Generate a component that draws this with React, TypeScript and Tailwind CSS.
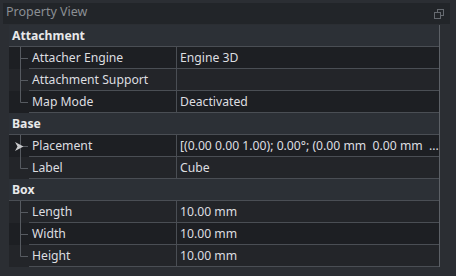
import React from "react";

type Prop = { name: string; value: string; expandable?: boolean };
type Group = { title: string; items: Prop[] };

const groups: Group[] = [
  {
    title: "Attachment",
    items: [
      { name: "Attacher Engine", value: "Engine 3D" },
      { name: "Attachment Support", value: "" },
      { name: "Map Mode", value: "Deactivated" },
    ],
  },
  {
    title: "Base",
    items: [
      {
        name: "Placement",
        value: "[(0.00 0.00 1.00); 0.00°; (0.00 mm  0.00 mm  ...",
        expandable: true,
      },
      { name: "Label", value: "Cube" },
    ],
  },
  {
    title: "Box",
    items: [
      { name: "Length", value: "10.00 mm" },
      { name: "Width", value: "10.00 mm" },
      { name: "Height", value: "10.00 mm" },
    ],
  },
];

const TreeBranch: React.FC<{ last: boolean; expandable?: boolean }> = ({ last, expandable }) => (
  <svg width="20" height="22" viewBox="0 0 20 22" className="shrink-0">
    <line x1="11.5" y1="0" x2="11.5" y2={last ? 11.5 : 22} stroke="#565a60" strokeWidth="1" />
    <line x1="11.5" y1="11.5" x2="19" y2="11.5" stroke="#565a60" strokeWidth="1" />
    {expandable && <polygon points="6,7 14.5,11.5 6,16 8.5,11.5" fill="#c9cacc" />}
  </svg>
);

export default function App() {
  let rowIndex = 0;
  return (
    <div
      className="w-[456px] h-[276px] bg-[#2b2e33] pt-[3px] px-[3px] overflow-hidden"
      style={{ fontFamily: '"Noto Sans", "Open Sans", sans-serif' }}
    >
      {/* Titelleiste */}
      <div className="h-[21px] mb-[1px] bg-[#222529] flex items-center justify-between pl-[3px] pr-[6px] mr-[3px]">
        <span className="text-[12.5px] text-[#8b8f94] leading-none -mt-[2px]">Property View</span>
        <svg width="10" height="10" viewBox="0 0 10 10">
          <rect x="3.5" y="0.5" width="6" height="6" fill="none" stroke="#666a70" />
          <rect x="0.5" y="3.5" width="6" height="6" fill="#222529" stroke="#666a70" />
        </svg>
      </div>

      {/* Tabelle */}
      <div className="ml-[6px] w-[431px] border-r border-[#5c6066] text-[12.2px] text-[#dddee0]">
        {groups.map((g) => {
          rowIndex++;
          return (
            <React.Fragment key={g.title}>
              <div className="h-[22px] flex items-center bg-[#2c3036] border-b border-[#4a4e54] pl-[3px] pt-[1px] font-bold text-[#e8e9ea]">
                {g.title}
              </div>
              {g.items.map((p, i) => {
                const dark = rowIndex % 2 === 1;
                rowIndex++;
                return (
                  <div
                    key={p.name}
                    className={`h-[22px] flex ${dark ? "bg-[#1d1f23]" : "bg-[#232529]"}`}
                  >
                    <TreeBranch last={i === g.items.length - 1} expandable={p.expandable} />
                    <div className="flex-1 flex border-b border-[#4a4e54] min-w-0">
                      <div className="w-[148px] shrink-0 border-r border-[#4a4e54] pl-[3px] pt-[1px] flex items-center">
                        {p.name}
                      </div>
                      <div className="flex-1 pl-[3px] pt-[1px] flex items-center whitespace-pre overflow-hidden">
                        {p.value}
                      </div>
                    </div>
                  </div>
                );
              })}
            </React.Fragment>
          );
        })}
      </div>
    </div>
  );
}
